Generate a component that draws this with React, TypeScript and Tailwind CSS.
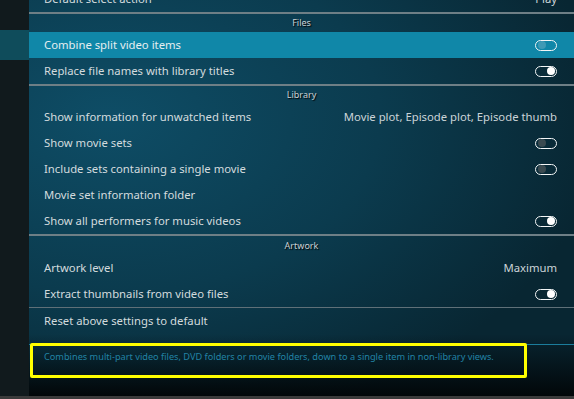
import React from 'react';

type Item = { label: string; value?: string; toggle?: 'on' | 'off'; active?: boolean };

function Toggle({ on, active }: { on: boolean; active?: boolean }) {
  return (
    <div className="w-[22px] h-[11px] rounded-full border-[1.5px] border-[#f2f5f6] flex items-center px-[1.5px]">
      <div
        className={
          on
            ? 'ml-auto w-[8px] h-[8px] rounded-full bg-white'
            : active
            ? 'w-[8px] h-[8px] rounded-full bg-[#3f9ab5]'
            : 'w-[8px] h-[8px] rounded-full bg-[#3a4a50]'
        }
      />
    </div>
  );
}

function Row({ item }: { item: Item }) {
  return (
    <div
      className={
        'h-[26px] flex items-center justify-between pl-[15px] pr-[17px] text-[11.3px] ' +
        (item.active ? 'bg-[#1087a8] text-[#e6eef0]' : 'text-[#d3dbde]')
      }
    >
      <span>{item.label}</span>
      {item.value && <span className="text-[#cbd4d8]">{item.value}</span>}
      {item.toggle && <Toggle on={item.toggle === 'on'} active={item.active} />}
    </div>
  );
}

function Header({ title, tall }: { title: string; tall?: boolean }) {
  return (
    <>
      <div className="h-[2px] bg-[#6e7f86]" />
      <div
        className={
          (tall ? 'h-[19px] ' : 'h-[18px] ') +
          'flex items-center justify-center text-[9px] text-[#c9d2d6] [text-shadow:1px_1px_1px_#000]'
        }
      >
        {title}
      </div>
    </>
  );
}

const files: Item[] = [
  { label: 'Combine split video items', toggle: 'off', active: true },
  { label: 'Replace file names with library titles', toggle: 'on' },
];

const library: Item[] = [
  { label: 'Show information for unwatched items', value: 'Movie plot, Episode plot, Episode thumb' },
  { label: 'Show movie sets', toggle: 'off' },
  { label: 'Include sets containing a single movie', toggle: 'off' },
  { label: 'Movie set information folder' },
  { label: 'Show all performers for music videos', toggle: 'on' },
];

const artwork: Item[] = [
  { label: 'Artwork level', value: 'Maximum' },
  { label: 'Extract thumbnails from video files', toggle: 'on' },
];

export default function App() {
  return (
    <div className="w-[574px] h-[399px] flex flex-col overflow-hidden bg-black font-['Noto_Sans',sans-serif]">
      <div className="flex flex-1 min-h-0">
        <aside className="w-[29px] bg-[#111a1d] pt-[30px]">
          <div className="h-[30px] bg-[#0f4c5b]" />
        </aside>
        <main className="flex-1 flex flex-col relative bg-[radial-gradient(ellipse_90%_80%_at_15%_30%,#0e4d66_0%,#0b3b4e_55%,#082632_100%)]">
          <div className="-mt-[14px]">
            <Row item={{ label: 'Default select action', value: 'Play' }} />
          </div>
          <Header title="Files" />
          {files.map((it) => (
            <Row key={it.label} item={it} />
          ))}
          <Header title="Library" />
          {library.map((it) => (
            <Row key={it.label} item={it} />
          ))}
          <Header title="Artwork" tall />
          {artwork.map((it) => (
            <Row key={it.label} item={it} />
          ))}
          <div className="h-[1px] bg-[#5f7078]" />
          <Row item={{ label: 'Reset above settings to default' }} />
          <div className="flex-1 flex flex-col bg-gradient-to-b from-transparent to-[#020709]">
            <div className="mt-[10px] h-[1px] bg-[#1b7d9c]" />
            <div className="pl-[15px] pt-[5px] text-[9.2px] text-[#2283a5]">
              Combines multi-part video files, DVD folders or movie folders, down to a single item in non-library views.
            </div>
          </div>
          <div className="absolute left-[1px] top-[343px] w-[497px] h-[35px] border-[3px] border-[#ffff00] rounded-[2px]" />
        </main>
      </div>
      <div className="h-[3px] bg-[#3b3b3b]" />
    </div>
  );
}
